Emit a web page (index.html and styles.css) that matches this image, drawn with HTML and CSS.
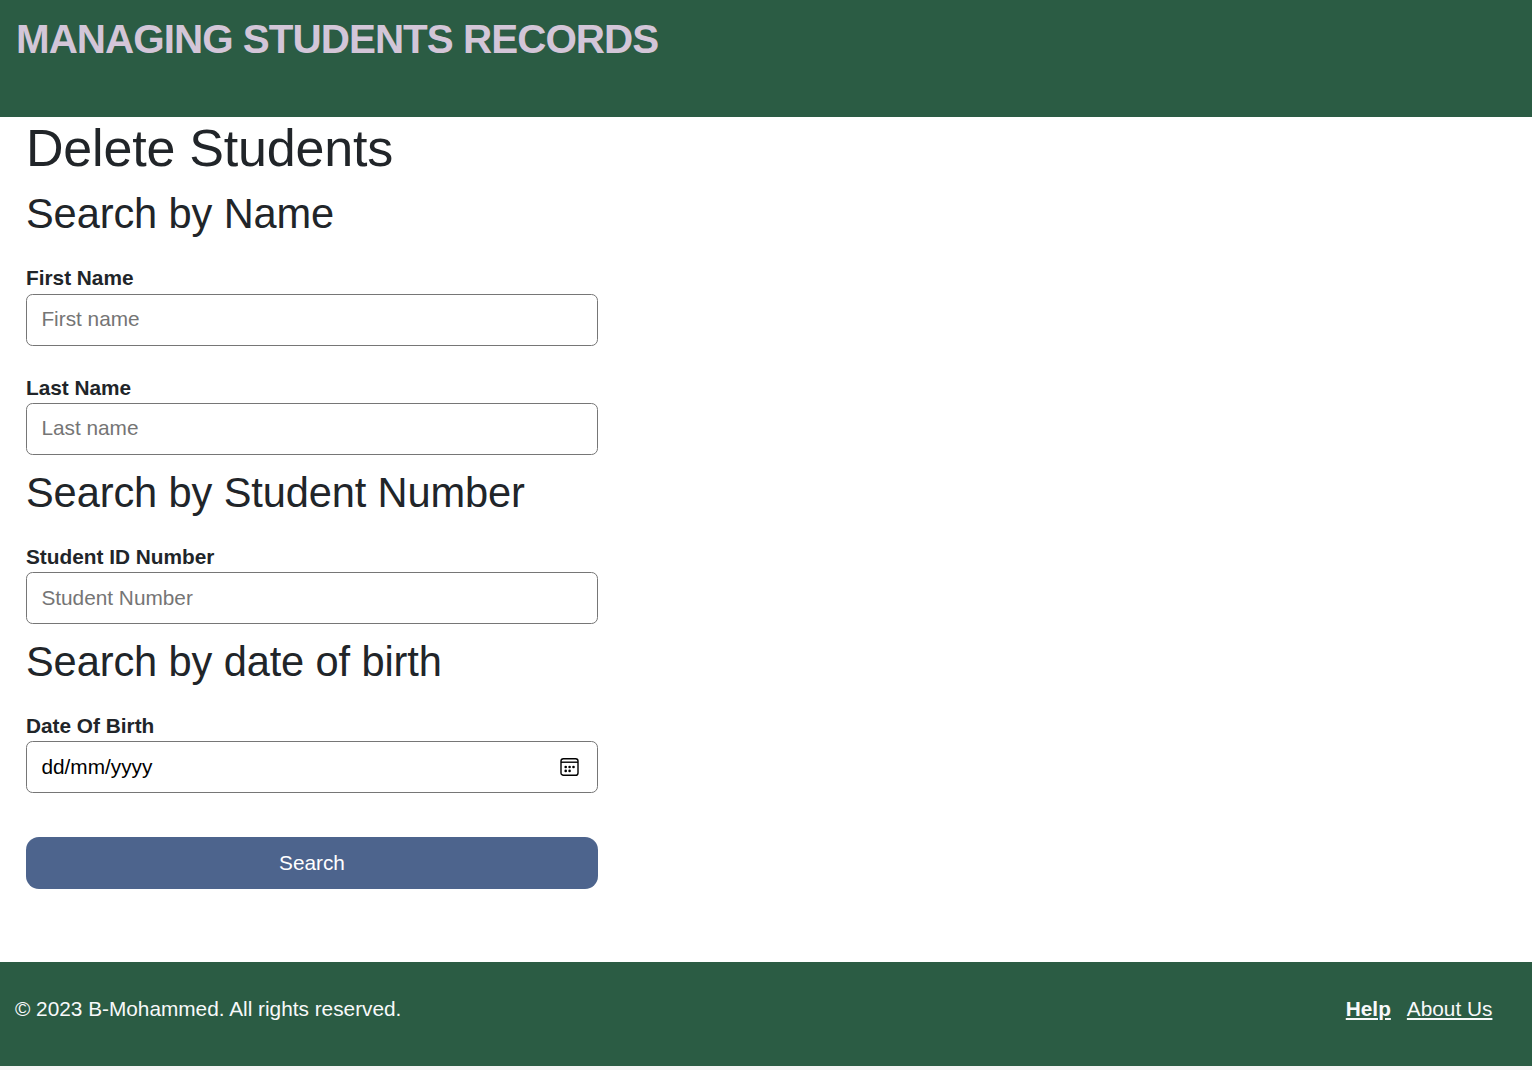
FILE: index.html
```html
<!DOCTYPE html>
<html lang="en">
<head>
<meta charset="utf-8">
<title>Managing Students Records</title>
<link rel="stylesheet" href="styles.css">
</head>
<body>
<header class="site-header">
  <span class="brand">MANAGING STUDENTS RECORDS</span>
</header>
<main class="content">
  <h1 class="page-title">Delete Students</h1>
  <form class="search-form">
    <h2 class="section-title">Search by Name</h2>
    <div class="field first-field">
      <label class="label" for="first">First Name</label>
      <input class="input name-input" id="first" type="text" placeholder="First name">
    </div>
    <div class="field">
      <label class="label" for="last">Last Name</label>
      <input class="input name-input" id="last" type="text" placeholder="Last name">
    </div>
    <h2 class="section-title">Search by Student Number</h2>
    <div class="field">
      <label class="label" for="number">Student ID Number</label>
      <input class="input" id="number" type="text" placeholder="Student Number">
    </div>
    <h2 class="section-title">Search by date of birth</h2>
    <div class="field">
      <span class="label">Date Of Birth</span>
      <div class="input date">
        <span class="date-text">dd/mm/yyyy</span>
        <svg class="calendar" viewBox="0 0 20 20" width="20" height="20" fill="none" stroke="#000" stroke-width="1.4">
          <rect x="1" y="1.7" width="17" height="16.6" rx="2.4"/>
          <path d="M1 5.2h17"/>
          <g fill="#000" stroke="none"><circle cx="5.7" cy="10" r="1.3"/><circle cx="9.6" cy="10" r="1.3"/><circle cx="13.5" cy="10" r="1.3"/><circle cx="5.7" cy="13.9" r="1.3"/><circle cx="9.6" cy="13.9" r="1.3"/></g>
        </svg>
      </div>
    </div>
    <button class="submit" type="button">Search</button>
  </form>
</main>
<footer class="site-footer">
  <span class="copyright">© 2023 B-Mohammed. All rights reserved.</span>
  <nav class="links"><a class="link strong" href="#">Help</a><a class="link" href="#">About Us</a></nav>
</footer>
</body>
</html>
```

FILE: styles.css
```css
* { box-sizing: border-box; }
body {
  margin: 0;
  min-height: 1070px;
  background: #f4f4f4;
  color: #212529;
  font: 20.8px/31.2px "Liberation Sans", Arial, sans-serif;
}
.site-header {
  height: 117px;
  padding: 14px 16px;
  background: #2b5c44;
}
.brand {
  display: block;
  color: #d3c6d8;
  font-size: 40.4px;
  font-weight: 700;
  letter-spacing: -0.97px;
  line-height: 50px;
  white-space: nowrap;
}
.content {
  height: 845px;
  padding-left: 26px;
  background: #fff;
}
.page-title {
  margin: 0 0 10px;
  font-size: 52px;
  font-weight: 400;
  letter-spacing: -0.2px;
  line-height: 62px;
}
.search-form { width: 572px; }
.section-title {
  margin: 0 0 23px;
  font-size: 41.6px;
  font-weight: 400;
  letter-spacing: -0.12px;
  line-height: 50px;
}
.field + .section-title { margin-top: 13px; }
.field + .field { margin-top: 26px; }
.label {
  display: block;
  height: 31px;
  font-weight: 700;
}
.first-field .label { height: 32px; }
.input {
  display: block;
  width: 100%;
  height: 52px;
  padding: 0 14.4px;
  border: 1.3px solid #767676;
  border-radius: 6.5px;
  background: #fff;
  color: #000;
  font: inherit;
}
.name-input { padding-bottom: 2px; }
.input::placeholder { color: #757575; opacity: 1; }
.date {
  display: flex;
  align-items: center;
  justify-content: space-between;
  padding-right: 17px;
}
.submit {
  display: block;
  width: 100%;
  height: 52px;
  margin-top: 44px;
  padding: 0;
  border: 0;
  border-radius: 13px;
  background: #4d648d;
  color: #fff;
  font: inherit;
}
.site-footer {
  display: flex;
  justify-content: space-between;
  height: 104px;
  padding: 31px 39.6px 0 15px;
  background: #2b5c44;
  color: #f8f9fa;
}
.links { display: flex; gap: 16px; }
.link { color: inherit; }
.strong { font-weight: 700; }
```
